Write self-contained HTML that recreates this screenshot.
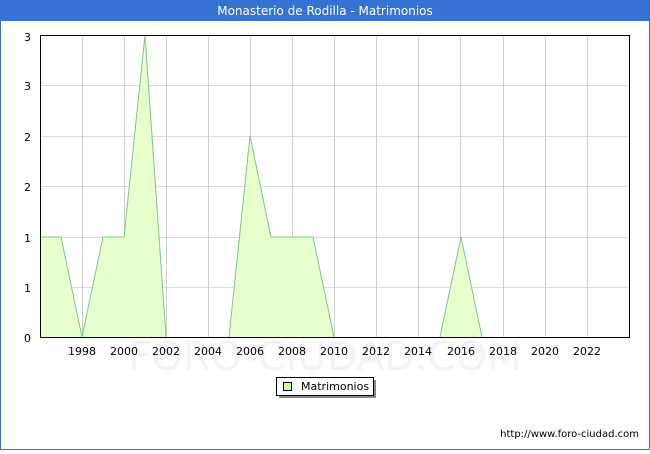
<!DOCTYPE html>
<html><head><style>
body{margin:0;width:650px;height:450px;overflow:hidden;background:#fff;font-family:"DejaVu Sans","Liberation Sans",sans-serif}
</style></head><body>
<svg width="650" height="450" xmlns="http://www.w3.org/2000/svg" font-family="DejaVu Sans, Liberation Sans, sans-serif">
<rect x="0.5" y="0.5" width="649" height="449" fill="#fff" stroke="#3473d4"/>
<rect x="0" y="0" width="650" height="21" fill="#3473d4"/>
<text x="325" y="15" font-size="12" fill="#fff" text-anchor="middle">Monasterio de Rodilla - Matrimonios</text>
<g stroke="#dcdcdc" stroke-width="1">
<line x1="40" y1="85.5" x2="630" y2="85.5"/><line x1="40" y1="136.5" x2="630" y2="136.5"/><line x1="40" y1="186.5" x2="630" y2="186.5"/><line x1="40" y1="237.5" x2="630" y2="237.5"/><line x1="40" y1="287.5" x2="630" y2="287.5"/>
</g>
<g stroke="#cfcfcf" stroke-width="1">
<line x1="82.5" y1="35" x2="82.5" y2="337"/><line x1="124.5" y1="35" x2="124.5" y2="337"/><line x1="166.5" y1="35" x2="166.5" y2="337"/><line x1="208.5" y1="35" x2="208.5" y2="337"/><line x1="250.5" y1="35" x2="250.5" y2="337"/><line x1="292.5" y1="35" x2="292.5" y2="337"/><line x1="334.5" y1="35" x2="334.5" y2="337"/><line x1="376.5" y1="35" x2="376.5" y2="337"/><line x1="418.5" y1="35" x2="418.5" y2="337"/><line x1="460.5" y1="35" x2="460.5" y2="337"/><line x1="503.5" y1="35" x2="503.5" y2="337"/><line x1="545.5" y1="35" x2="545.5" y2="337"/><line x1="587.5" y1="35" x2="587.5" y2="337"/>
</g>
<text x="325" y="370" font-size="40" fill="#f2f3f8" text-anchor="middle">FORO-CIUDAD.COM</text>
<polygon points="40,237 61,237 82,337 103,237 124,237 145,35 166,337 229,337 250,136 271,237 313,237 334,337 440,337 461,237 482,337 40,337" fill="#e6ffcc"/>
<polyline points="40,237 61,237 82,337 103,237 124,237 145,35 166,337 M" fill="none" stroke="#7fc48f"/>
<polyline points="229,337 250,136 271,237 313,237 334,337" fill="none" stroke="#7fc48f"/>
<polyline points="440,337 461,237 482,337" fill="none" stroke="#7fc48f"/>
<rect x="40.5" y="35.5" width="589" height="302" fill="none" stroke="#000"/>
<g font-size="11" fill="#000" text-anchor="end">
<text x="31" y="41">3</text><text x="31" y="90">3</text><text x="31" y="141">2</text><text x="31" y="191">2</text><text x="31" y="242">1</text><text x="31" y="292">1</text><text x="31" y="342">0</text>
</g>
<g font-size="11" fill="#000" text-anchor="middle">
<text x="82" y="355">1998</text><text x="124" y="355">2000</text><text x="166" y="355">2002</text><text x="208" y="355">2004</text><text x="250" y="355">2006</text><text x="292" y="355">2008</text><text x="334" y="355">2010</text><text x="376" y="355">2012</text><text x="418" y="355">2014</text><text x="461" y="355">2016</text><text x="503" y="355">2018</text><text x="545" y="355">2020</text><text x="587" y="355">2022</text>
</g>
<rect x="279" y="380" width="97" height="18" fill="#888"/>
<rect x="276.5" y="377.5" width="97" height="18" fill="#fff" stroke="#000"/>
<rect x="283.5" y="382.5" width="8" height="8" fill="#ccff99" stroke="#000"/>
<text x="301" y="390" font-size="11">Matrimonios</text>
<text x="639" y="437" font-size="10" text-anchor="end">http://www.foro-ciudad.com</text>
</svg>
</body></html>
